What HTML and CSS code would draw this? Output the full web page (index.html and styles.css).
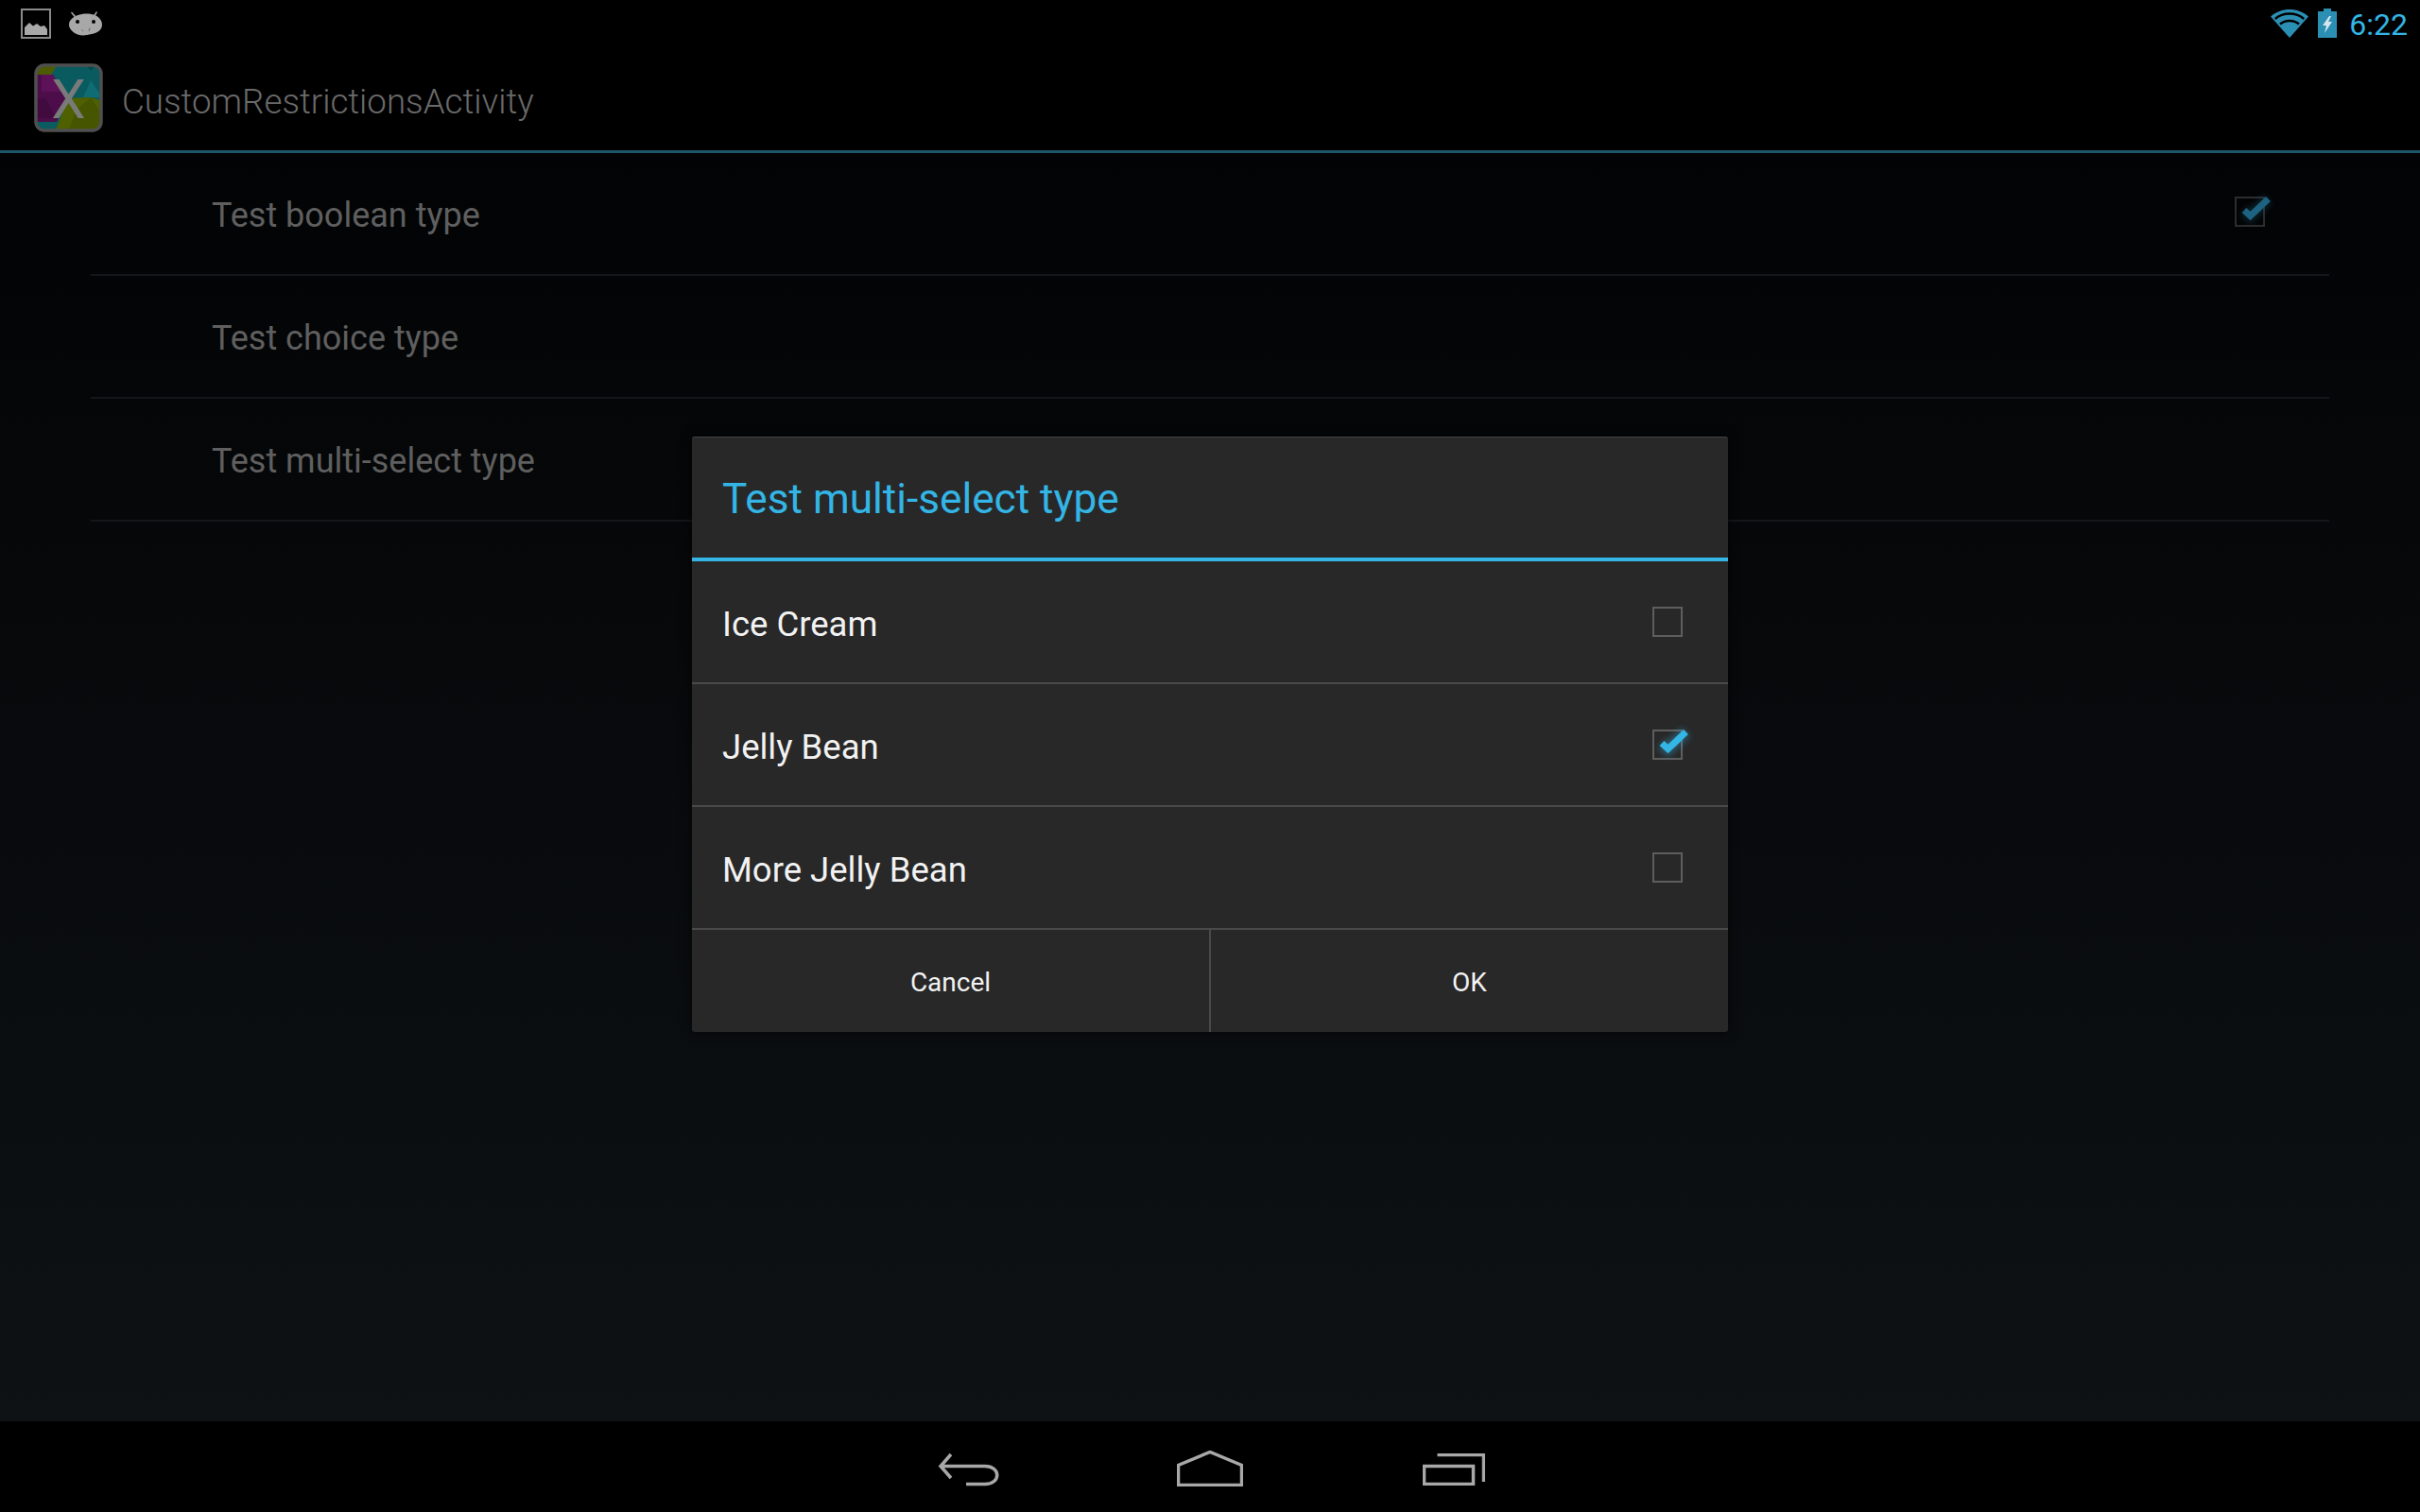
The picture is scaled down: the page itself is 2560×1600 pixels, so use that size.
FILE: index.html
```html
<!DOCTYPE html>
<html lang="en">
<head>
    <meta charset="UTF-8">
    <title>CustomRestrictionsActivity</title>
    <link rel="stylesheet" href="styles.css">
</head>
<body>

<div class="screen">

    <!-- Status bar -->
    <div class="status-bar">
        <div class="status-left">
            <svg class="ic-picture" width="32" height="32" viewBox="0 0 32 32">
                <rect x="1" y="1" width="30" height="30" fill="none" stroke="#8a8a8a" stroke-width="2"/>
                <path d="M4 28V20L9 15L13 18.500L17 16L21 19L25 18L28 22V28Z" fill="#a8a8a8"/>
            </svg>
            <svg class="ic-android" width="36" height="26" viewBox="0 0 36 26">
                <path d="M3 0.500L7 5L5.500 6L2 1.500Z M29 0L30 1L27 6L25.500 5Z" fill="#a8a8a8"/>
                <path d="M11 3.500C15 2 22 2 26 3.500C31 5 35 9 35 14C35 18 33 20 30 22C26 24 22 24 19 25C14 26 9 25 6 23C3 21 0 18 0 14C0 9 5 5 11 3.500Z" fill="#a8a8a8"/>
                <circle cx="9" cy="11" r="2" fill="#000"/>
                <circle cx="26" cy="11" r="2" fill="#000"/>
                <path d="M14 19.500L15 21M22 17.500L21 21" stroke="#666" stroke-width="1"/>
            </svg>
        </div>
        <div class="status-right">
            <svg class="ic-wifi" width="40" height="31" viewBox="0 0 40 31">
                <path d="M20 31L0 8.500C11 -1.500 29 -1.500 40 8.500Z" fill="#2b8fb3"/>
                <path d="M4.800 11C13 3.800 27 3.800 35.200 11M10 16.500C15.500 11.800 24.500 11.800 30 16.500" fill="none" stroke="#000" stroke-width="2.500"/>
            </svg>
            <svg class="ic-battery" width="20" height="31" viewBox="0 0 20 31">
                <path d="M6 0H14V3H20V31H0V3H6Z" fill="#2b8fb3"/>
                <path d="M12 8L5 18H9L7 26L15 14H11L14 8Z" fill="#d5e6ec"/>
            </svg>
            <span class="clock">6:22</span>
        </div>
    </div>

    <!-- Action bar -->
    <div class="action-bar">
        <svg class="app-icon" width="73" height="73" viewBox="0 0 73 73">
            <defs>
                <clipPath id="iconClip"><rect x="2" y="2" width="69" height="69" rx="9"/></clipPath>
            </defs>
            <g clip-path="url(#iconClip)">
                <rect width="73" height="73" fill="#0a5b60"/>
                <path d="M0 0H26L18 12H0Z" fill="#4d5c02"/>
                <path d="M0 12H20L36 37L24 62H0Z" fill="#4c0d4a"/>
                <path d="M8 12L20 12L30 30H8Z" fill="#5c1158"/>
                <path d="M0 37L12 37L24 58H0Z" fill="#420b40"/>
                <path d="M0 62H24L20 73H0Z" fill="#0a5b60"/>
                <path d="M36 37L60 36L73 40V73H22Z" fill="#4e6000"/>
                <path d="M44 50L60 36L73 56V73H36Z" fill="#465600"/>
                <path d="M54 0L60 8L66 0Z" fill="#07474c"/>
                <path d="M52 36L60 18L72 36Z" fill="#0e6c72"/>
            </g>
            <rect x="2" y="2" width="69" height="69" rx="9" fill="none" stroke="#4f4f4f" stroke-width="3.500"/>
            <text class="app-icon-x" x="36.500" y="57.500" text-anchor="middle">X</text>
        </svg>
        <span class="app-title">CustomRestrictionsActivity</span>
    </div>

    <!-- Settings list behind the dialog -->
    <div class="content">
        <div class="pref-list">
            <div class="pref-row">
                <span>Test boolean type</span>
                <svg class="check" width="40" height="36" viewBox="0 0 40 36">
                    <rect x="1" y="4" width="30" height="30" fill="none" stroke="#2c2c2c" stroke-width="2"/>
                    <path class="tick-glow dim" d="M10 17.500L16.500 23.500L35.500 5.500"/>
                    <path class="tick dim" d="M10 17.500L16.500 23.500L35.500 5.500"/>
                </svg>
            </div>
            <div class="pref-row"><span>Test choice type</span></div>
            <div class="pref-row"><span>Test multi-select type</span></div>
        </div>
    </div>

    <!-- Navigation bar -->
    <div class="nav-bar">
        <svg class="nav-back" width="66" height="36" viewBox="0 0 66 36">
            <path class="nav-ic" d="M14 2L3 14.500L14 27M3 14.500H50C67 14.500 67 33.500 50 33.500H30"/>
        </svg>
        <svg class="nav-home" width="70" height="38" viewBox="0 0 70 38">
            <path class="nav-ic" d="M1.500 36.500V15.500L35 1.500L68.500 15.500V36.500Z"/>
        </svg>
        <svg width="66" height="34" viewBox="0 0 66 34">
            <path class="nav-ic" d="M1.500 13.500H53.500V32.500H1.500Z M15.500 1.500H64.500V30"/>
        </svg>
    </div>

    <!-- Dialog -->
    <div class="scrim">
        <div class="dialog">
            <div class="dialog-title"><span>Test multi-select type</span></div>
            <div class="choice">
                <span>Ice Cream</span>
                <svg class="check" width="40" height="36" viewBox="0 0 40 36">
                    <rect x="1" y="4" width="30" height="30" fill="none" stroke="#5e5e5e" stroke-width="2"/>
                </svg>
            </div>
            <div class="choice">
                <span>Jelly Bean</span>
                <svg class="check" width="40" height="36" viewBox="0 0 40 36">
                    <rect x="1" y="4" width="30" height="30" fill="none" stroke="#5e5e5e" stroke-width="2"/>
                    <path class="tick-glow" d="M10 17.500L16.500 23.500L35.500 5.500"/>
                    <path class="tick" d="M10 17.500L16.500 23.500L35.500 5.500"/>
                </svg>
            </div>
            <div class="choice">
                <span>More Jelly Bean</span>
                <svg class="check" width="40" height="36" viewBox="0 0 40 36">
                    <rect x="1" y="4" width="30" height="30" fill="none" stroke="#5e5e5e" stroke-width="2"/>
                </svg>
            </div>
            <div class="dialog-buttons">
                <div class="dialog-btn">Cancel</div>
                <div class="dialog-btn">OK</div>
            </div>
        </div>
    </div>

</div>

</body>
</html>
```

FILE: styles.css
```css
html, body {
    margin: 0;
    padding: 0;
    background: #000;
}

.screen {
    position: relative;
    width: 2560px;
    height: 1600px;
    display: flex;
    flex-direction: column;
    overflow: hidden;
    font-family: Roboto, "Liberation Sans", sans-serif;
}

/* Status bar */
.status-bar {
    height: 50px;
    flex: none;
    display: flex;
    justify-content: space-between;
    background: #000;
}

.status-left {
    display: flex;
    align-items: flex-start;
    padding-left: 22px;
    padding-top: 9px;
    gap: 19px;
}

.ic-android {
    margin-top: 3px;
}

.status-right {
    display: flex;
    align-items: flex-start;
    padding-top: 9px;
    padding-right: 13px;
}

.ic-wifi {
    margin-right: 10px;
}

.clock {
    margin-left: 13px;
    font-size: 32px;
    line-height: 34px;
    color: #33b5e5;
}

/* Action bar */
.action-bar {
    height: 109px;
    flex: none;
    display: flex;
    align-items: center;
    padding-left: 36px;
    background: #000;
    border-bottom: 3px solid #1d5569;
}

.app-icon {
    flex: none;
    margin-top: -3px;
}

.app-icon-x {
    font-family: Roboto, sans-serif;
    font-weight: 400;
    font-size: 58px;
    fill: #7a7a7a;
}

.app-title {
    margin-left: 20px;
    padding-top: 6px;
    font-size: 36.700px;
    font-weight: 300;
    color: #6a6a6a;
}

/* List behind the dialog */
.content {
    flex: 1;
    background: linear-gradient(#020304, #0e1215);
}

.pref-list {
    margin: 0 96px;
}

.pref-row {
    height: 128px;
    display: flex;
    align-items: center;
    justify-content: space-between;
    padding: 0 60px 0 128px;
    border-bottom: 2px solid #14171a;
    font-size: 36px;
    color: #5f5f5f;
}

.pref-row span {
    padding-top: 4px;
}

.check {
    flex: none;
    overflow: visible;
}

.pref-row .check {
    margin-top: -6px;
}

.tick, .tick-glow {
    fill: none;
}

.tick {
    stroke: #33b5e5;
    stroke-width: 7;
}

.tick-glow {
    stroke: rgba(51, 181, 229, 0.35);
    stroke-width: 13;
    filter: blur(3px);
}

.tick.dim {
    stroke: #1d6280;
}

.tick-glow.dim {
    stroke: rgba(29, 98, 128, 0.3);
}

/* Navigation bar */
.nav-bar {
    height: 96px;
    flex: none;
    display: flex;
    justify-content: center;
    align-items: flex-start;
    gap: 190px;
    padding-top: 34px;
    box-sizing: border-box;
    background: #000;
}

.nav-back {
    margin-left: 3px;
    margin-right: -3px;
    margin-top: -1px;
}

.nav-home {
    margin-top: -3px;
}

.nav-ic {
    fill: none;
    stroke: #a8a8a8;
    stroke-width: 3.500;
}

/* Dialog */
.scrim {
    position: absolute;
    top: 50px;
    left: 0;
    right: 0;
    bottom: 96px;
    display: flex;
    align-items: center;
    justify-content: center;
}

.dialog {
    width: 1096px;
    background: #282828;
    border-radius: 3px;
    box-shadow: 0 0 12px rgba(0, 0, 0, 0.7);
    border-top: 1px solid #444;
}

.dialog-title {
    height: 127px;
    display: flex;
    align-items: center;
    padding-left: 32px;
    border-bottom: 4px solid #33b5e5;
    font-size: 44.200px;
    color: #33b5e5;
}

.dialog-title span {
    padding-top: 3px;
}

.choice {
    height: 128px;
    display: flex;
    align-items: center;
    justify-content: space-between;
    padding: 0 40px 0 32px;
    border-bottom: 2px solid #4a4a4a;
    font-size: 36.500px;
    color: #f2f2f2;
}

.choice span {
    padding-top: 4px;
}

.choice .check {
    margin-top: -3px;
}

.dialog-buttons {
    height: 108px;
    display: flex;
}

.dialog-btn {
    flex: 1;
    display: flex;
    align-items: center;
    justify-content: center;
    padding-top: 2px;
    box-sizing: border-box;
    font-size: 28px;
    color: #f2f2f2;
}

.dialog-btn + .dialog-btn {
    border-left: 2px solid #4a4a4a;
}
```
